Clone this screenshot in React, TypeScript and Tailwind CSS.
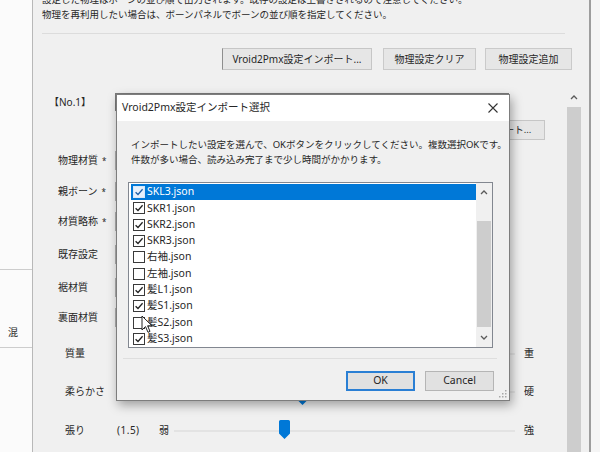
import React from "react";

// Files shown in the import dialog (list is scrolled, SKL1/SKL2 above)
const FILES = [
  { name: "SKL3.json", checked: true, selected: true },
  { name: "SKR1.json", checked: true },
  { name: "SKR2.json", checked: true },
  { name: "SKR3.json", checked: true },
  { name: "右袖.json", checked: false },
  { name: "左袖.json", checked: false },
  { name: "髪L1.json", checked: true },
  { name: "髪S1.json", checked: true },
  { name: "髪S2.json", checked: false },
  { name: "髪S3.json", checked: true },
];

const FIELDS = [
  { label: "物理材質", req: true, cls: "mt-[10px]" },
  { label: "親ボーン", req: true, cls: "mt-[11px]" },
  { label: "材質略称", req: true, cls: "mt-[10px]" },
  { label: "既存設定", req: false, cls: "mt-[13px]" },
  { label: "裾材質", req: false, cls: "mt-[13px]" },
  { label: "裏面材質", req: false, cls: "mt-[10px]" },
];

function Chevron({ down }: { down?: boolean }) {
  return (
    <svg width="8" height="5" viewBox="0 0 8 5">
      <path
        d={down ? "M1 1 L4 4 L7 1" : "M1 4 L4 1 L7 4"}
        fill="none"
        stroke="#5a5a5a"
        strokeWidth="1.3"
      />
    </svg>
  );
}

function Check({ on, selected }: { on: boolean; selected?: boolean }) {
  return (
    <span
      className={`flex h-[12px] w-[12px] shrink-0 items-center justify-center border ${
        selected ? "border-[#d6e8fa] bg-[#e6f0fb]" : "border-[#3a3a3a] bg-white"
      }`}
    >
      {on && (
        <svg width="10" height="10" viewBox="0 0 10 10">
          <path
            d="M1.6 5.2 L4 7.5 L8.6 2.3"
            fill="none"
            stroke={selected ? "#1d5fa6" : "#222"}
            strokeWidth="1.3"
          />
        </svg>
      )}
    </span>
  );
}

function Thumb() {
  return (
    <svg width="11" height="19" viewBox="0 0 11 19">
      <path
        d="M1.5 0 H9.5 A1.5 1.5 0 0 1 11 1.5 V13.5 L5.5 19 L0 13.5 V1.5 A1.5 1.5 0 0 1 1.5 0 Z"
        fill="#0078d7"
      />
    </svg>
  );
}

function SliderRow({
  label,
  value,
  low,
  high,
  thumb,
  cls,
}: {
  label: string;
  value: string;
  low: string;
  high: string;
  thumb: string;
  cls: string;
}) {
  return (
    <div className={`flex h-[20px] items-center ${cls}`}>
      <div className="w-[82px] shrink-0 pl-[32px]">{label}</div>
      <span className="ml-[2px] w-[26px] tracking-[0.5px]">{value}</span>
      <span className="ml-[16px]">{low}</span>
      <div className="relative ml-[5px] h-[20px] flex-1">
        <div className="absolute left-0 right-0 top-[10px] h-[2px] bg-[#e3e3e3]" />
        <div className={`absolute top-0 ${thumb}`}>
          <Thumb />
        </div>
      </div>
      <span className="ml-[9px] mr-[31px]">{high}</span>
    </div>
  );
}

export default function App() {
  return (
    <div className="relative flex h-[452px] w-[600px] overflow-hidden bg-white font-['Noto_Sans','Noto_Sans_CJK_JP',sans-serif] text-[9.5px] text-[#262626]">
      {/* window behind, left edge */}
      <div className="flex w-[32px] shrink-0 flex-col bg-[#fbfbfb]">
        <div className="h-[270px] border-b border-[#cdcdcd]" />
        <div className="flex h-[78px] items-end border-b border-[#cdcdcd] pb-[7px] pl-[8px] text-[10px]">
          混
        </div>
      </div>

      {/* main window */}
      <div className="flex w-[559px] shrink-0 flex-col border-l border-r-2 border-[#b8b8b8] border-r-[#9d9d9d] bg-[#f0f0f0]">
        <div className="pl-[9px] pr-[17px]">
          <p className="-mt-[8px] leading-[15px]">
            設定した物理はボーンの並び順で出力されます。既存の設定は上書きされるので注意してください。
            <br />
            物理を再利用したい場合は、ボーンパネルでボーンの並び順を指定してください。
          </p>
          <div className="mr-[7px] mt-[11px] h-px bg-[#dcdcdc]" />
          <div className="mt-[14px] flex justify-end">
            <button className="h-[22px] w-[150px] border border-[#c6c6c6] border-l-[#8e8e8e] bg-[#e6e6e6] text-[10px]">
              Vroid2Pmx設定インポート...
            </button>
            <button className="ml-[11px] h-[22px] w-[93px] border border-[#cacaca] bg-[#e6e6e6] text-[10px]">
              物理設定クリア
            </button>
            <button className="ml-[9px] h-[22px] w-[87px] border border-[#cacaca] bg-[#e6e6e6] text-[10px]">
              物理設定追加
            </button>
          </div>
        </div>

        <div className="mt-[20px] flex flex-1">
          <div className="flex-1 text-[10px]">
            <div className="mt-[2px] flex h-[20px] items-center">
              <div className="w-[82px] shrink-0 pl-[16px]">【No.1】</div>
              <div className="h-[18px] w-[394px] border border-[#7a7a7a] bg-white" />
            </div>
            <div className="mt-[8px] flex h-[20px] items-center justify-end pr-[20px]">
              <button className="h-[20px] w-[150px] border border-[#c6c6c6] bg-[#e6e6e6] text-[9.5px]">
                Vroid2Pmx設定インポート...
              </button>
            </div>
            {FIELDS.map((f) => (
              <div key={f.label} className={`flex h-[20px] items-center ${f.cls}`}>
                <div className="w-[82px] shrink-0 pl-[25px]">
                  {f.label}
                  {f.req && <span className="ml-[4px] text-[8px]">*</span>}
                </div>
                <div className="h-[19px] w-[394px] border border-[#adadad] bg-white" />
              </div>
            ))}
            <SliderRow label="質量" value="(1.0)" low="軽" high="重" thumb="left-[120px]" cls="mt-[16px]" />
            <SliderRow label="柔らかさ" value="(1.0)" low="柔" high="硬" thumb="left-[123px] top-[5px]" cls="mt-[18px]" />
            <SliderRow label="張り" value="(1.5)" low="弱" high="強" thumb="left-[105px]" cls="mt-[19px]" />
          </div>

          {/* vertical scrollbar */}
          <div className="mr-[6px] flex w-[18px] flex-col items-center">
            <div className="flex h-[14px] w-full items-center justify-center">
              <Chevron />
            </div>
            <div className="mt-[3px] w-[14px] flex-1 bg-[#cdcdcd]" />
          </div>
        </div>
      </div>

      <div className="flex-1 bg-[#f5f5f5]" />

      {/* import dialog */}
      <div className="absolute left-[116px] top-[94px] flex h-[307px] w-[394px] flex-col border border-[#7d7d7d] bg-[#f0f0f0] shadow-[2px_4px_10px_rgba(0,0,0,0.35)]">
        <div className="flex h-[26px] items-center justify-between bg-white pl-[5px] pr-[11px] text-[10.5px]">
          <span>Vroid2Pmx設定インポート選択</span>
          <svg width="10" height="10" viewBox="0 0 10 10">
            <path d="M0.5 0.5 L9.5 9.5 M9.5 0.5 L0.5 9.5" stroke="#333" strokeWidth="1.1" />
          </svg>
        </div>
        <div className="pl-[14px] pt-[16px] leading-[15px]">
          <p>インポートしたい設定を選んで、OKボタンをクリックしてください。複数選択OKです。</p>
          <p>件数が多い場合、読み込み完了まで少し時間がかかります。</p>
        </div>

        <div className="ml-[11px] mr-[16px] mt-[15px] flex h-[166px] border border-[#828790] bg-white text-[10.5px]">
          <div className="flex-1 pl-[2px] pt-[1px]">
            {FILES.map((f) => (
              <div
                key={f.name}
                className={`flex h-[16.3px] items-center pl-[2px] ${
                  f.selected ? "bg-[#0078d7] text-white" : ""
                }`}
              >
                <Check on={f.checked} selected={f.selected} />
                <span className="ml-[2px]">{f.name}</span>
              </div>
            ))}
          </div>
          <div className="flex w-[16px] flex-col items-center bg-[#f0f0f0]">
            <div className="flex h-[17px] items-center pt-[2px]">
              <Chevron />
            </div>
            <div className="mt-[21px] h-[106px] w-[14px] bg-[#cdcdcd]" />
            <div className="flex flex-1 items-center">
              <Chevron down />
            </div>
          </div>
        </div>

        <div className="ml-[6px] mr-[12px] mt-[10px] h-px bg-[#dedede]" />

        <div className="mr-[15px] mt-[12px] flex justify-end gap-[10px] text-[10.5px]">
          <button className="h-[20px] w-[69px] border-2 border-[#2a7fd4] bg-[#e1e1e1]">OK</button>
          <button className="h-[20px] w-[69px] border border-[#b5b5b5] bg-[#e1e1e1]">Cancel</button>
        </div>

        <svg className="absolute bottom-[2px] right-[2px]" width="9" height="9" viewBox="0 0 9 9">
          <g fill="#a8a8a8">
            <rect x="7" y="1" width="1.5" height="1.5" />
            <rect x="4" y="4" width="1.5" height="1.5" />
            <rect x="7" y="4" width="1.5" height="1.5" />
            <rect x="1" y="7" width="1.5" height="1.5" />
            <rect x="4" y="7" width="1.5" height="1.5" />
            <rect x="7" y="7" width="1.5" height="1.5" />
          </g>
        </svg>
      </div>

      {/* mouse pointer */}
      <svg className="absolute left-[141px] top-[315px]" width="12" height="19" viewBox="0 0 12 19">
        <path
          d="M1 1 L1 15 L4.5 11.6 L7 17.3 L9 16.4 L6.6 10.8 L11 10.8 Z"
          fill="#fff"
          stroke="#222"
          strokeWidth="1"
          strokeLinejoin="round"
        />
      </svg>
    </div>
  );
}
